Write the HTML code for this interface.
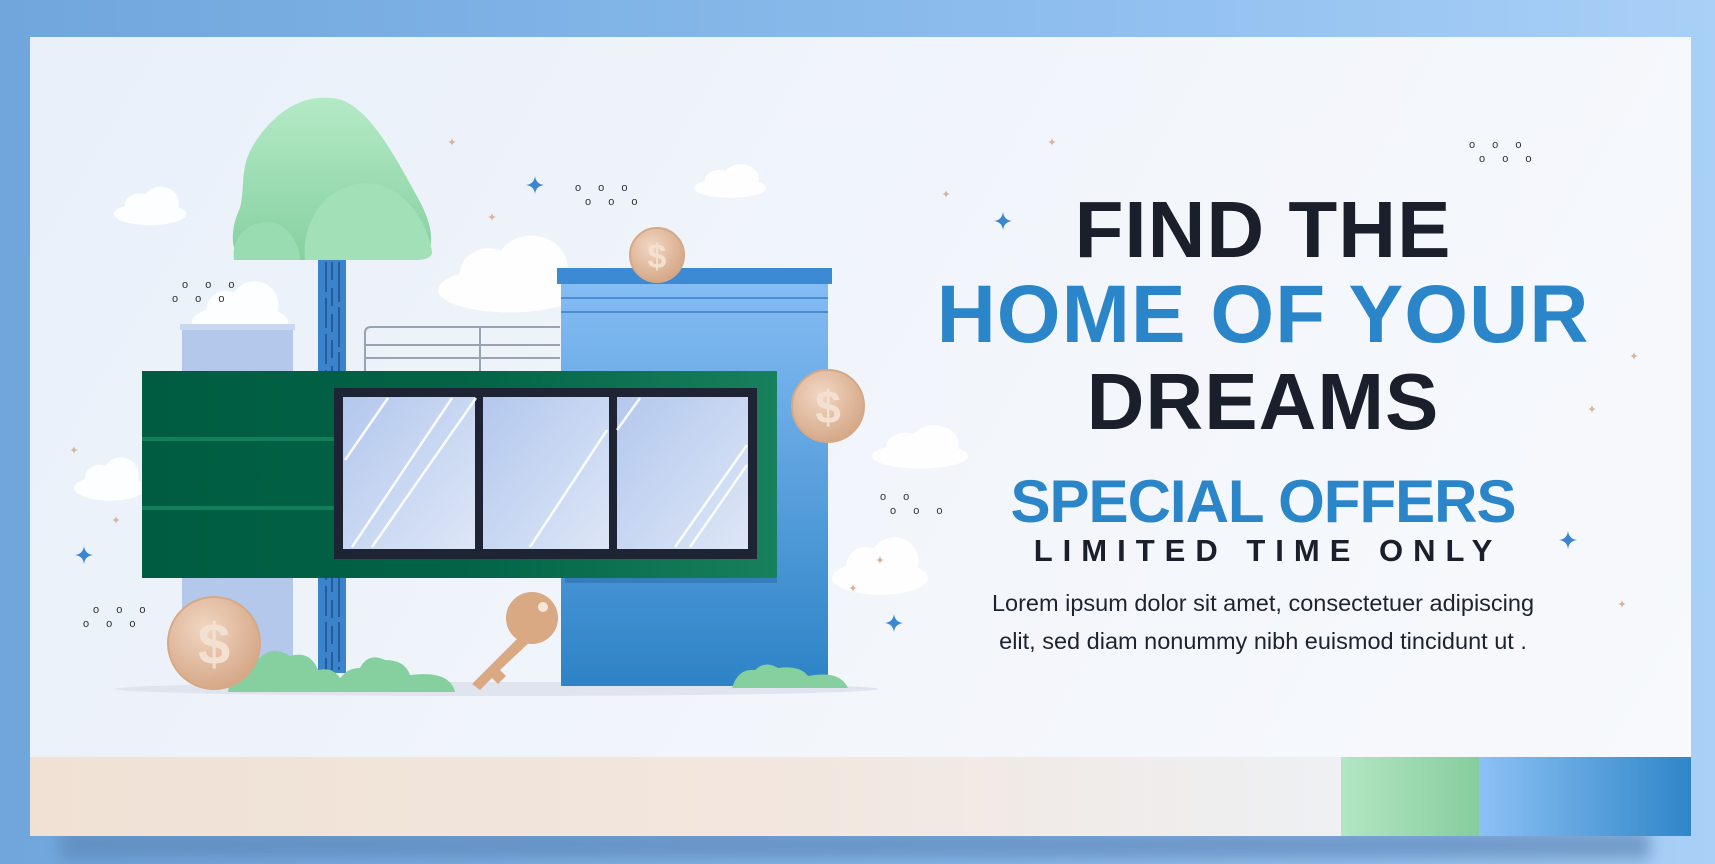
<!DOCTYPE html>
<html><head><meta charset="utf-8"><style>
*{margin:0;padding:0;box-sizing:border-box}
body{width:1715px;height:864px;overflow:hidden;background:linear-gradient(90deg,#6fa6dc,#8dbdee 60%,#a9d0f7);position:relative;font-family:"Liberation Sans",sans-serif}
.a{position:absolute}
.panel{left:30px;top:37px;width:1661px;height:720px;background:linear-gradient(120deg,#e9f0fa,#f3f6fb 60%,#f7f9fc)}
.t{position:absolute;left:900px;width:726px;text-align:center;font-weight:bold;white-space:nowrap}
.dots{position:absolute;font-size:11px;letter-spacing:7px;color:#333;line-height:14px}
</style></head><body>
<div class="a" style="left:60px;top:830px;width:1590px;height:30px;background:#5d86b8;filter:blur(8px);opacity:.7"></div>
<div class="a panel"></div>
<div class="a" style="left:30px;top:757px;width:1311px;height:79px;background:linear-gradient(90deg,#f0e1d4,#f2e7df 60%,#eef0f3)"></div>
<div class="a" style="left:1341px;top:757px;width:138px;height:79px;background:linear-gradient(90deg,#b3e6c3,#86cd9d)"></div>
<div class="a" style="left:1479px;top:757px;width:212px;height:79px;background:linear-gradient(90deg,#8cc1f5,#2f86c8)"></div>

<svg class="a" style="left:0;top:0" width="1715" height="864">
<defs>
<linearGradient id="tw" x1="0" y1="0" x2="0" y2="1"><stop offset="0" stop-color="#86bdf5"/><stop offset="1" stop-color="#2d83c6"/></linearGradient>
<linearGradient id="gb" x1="0" y1="0" x2="1" y2="0"><stop offset="0" stop-color="#005c40"/><stop offset=".5" stop-color="#026346"/><stop offset="1" stop-color="#17805c"/></linearGradient>
<linearGradient id="tr" x1="0" y1="0" x2="0" y2="1"><stop offset="0" stop-color="#b4eac6"/><stop offset="1" stop-color="#86d0a0"/></linearGradient>
<radialGradient id="cn" cx=".4" cy=".35" r=".7"><stop offset="0" stop-color="#f1d7c3"/><stop offset="1" stop-color="#d4a584"/></radialGradient>
<linearGradient id="pn" x1="0" y1="0" x2="1" y2="1"><stop offset="0" stop-color="#b3c8ee"/><stop offset="1" stop-color="#dde6f6"/></linearGradient>
<g id="cl"><ellipse cx="0" cy="0" rx="40" ry="14" fill="#fff"/><circle cx="-12" cy="-10" r="16" fill="#fff"/><circle cx="12" cy="-14" r="20" fill="#fff"/></g>
<g id="sp"><path d="M0-9Q1-1 9 0Q1 1 0 9Q-1 1-9 0Q-1-1 0-9Z"/></g>
</defs>
<g opacity=".9">
<use href="#cl" transform="translate(150,214) scale(.9,.8)"/>
<use href="#cl" transform="translate(240,322) scale(1.2)"/>
<use href="#cl" transform="translate(510,290) scale(1.8,1.6)"/>
<use href="#cl" transform="translate(730,188) scale(.9,.7)"/>
<use href="#cl" transform="translate(110,488) scale(.9)"/>
<use href="#cl" transform="translate(920,456) scale(1.2,.9)"/>
<use href="#cl" transform="translate(880,578) scale(1.2)"/>
</g>
<g fill="#3b86d0"><use href="#sp" transform="translate(535,185)"/><use href="#sp" transform="translate(84,555)"/><use href="#sp" transform="translate(1003,221)"/><use href="#sp" transform="translate(894,623)"/><use href="#sp" transform="translate(1568,540)"/></g>
<g fill="#d7b39a"><use href="#sp" transform="translate(452,142) scale(.45)"/><use href="#sp" transform="translate(492,217) scale(.45)"/><use href="#sp" transform="translate(946,194) scale(.45)"/><use href="#sp" transform="translate(1052,142) scale(.45)"/><use href="#sp" transform="translate(1634,356) scale(.45)"/><use href="#sp" transform="translate(1592,409) scale(.45)"/><use href="#sp" transform="translate(1622,604) scale(.45)"/><use href="#sp" transform="translate(74,450) scale(.45)"/><use href="#sp" transform="translate(116,520) scale(.45)"/><use href="#sp" transform="translate(880,560) scale(.45)"/><use href="#sp" transform="translate(853,588) scale(.45)"/></g>
<ellipse cx="497" cy="689" rx="382" ry="7" fill="#dfe4ee"/>
<rect x="182" y="326" width="111" height="336" fill="#b3c8ea"/>
<rect x="180" y="324" width="115" height="6" fill="#c9d7f0"/>
<rect x="318" y="258" width="28" height="415" fill="#3b84cb"/>
<g stroke="#1d4f8c" stroke-width="1.5"><line x1="326" y1="262" x2="326" y2="670" stroke-dasharray="30 6"/><line x1="332" y1="262" x2="332" y2="670" stroke-dasharray="18 8"/><line x1="339" y1="262" x2="339" y2="670" stroke-dasharray="40 5"/></g>
<path d="M250 260 C228 260 230 228 240 208 C246 185 238 165 258 138 C282 104 312 92 342 100 C372 112 396 158 418 198 C440 238 432 260 412 260Z" fill="url(#tr)"/>
<path d="M305 260 C300 210 340 175 380 185 C410 195 428 225 432 252 C432 258 425 260 415 260Z" fill="#a2e0b8"/>
<path d="M234 260 C230 232 258 215 280 225 C295 235 300 250 300 260Z" fill="#9adcb2"/>
<g stroke="#9aa3b2" stroke-width="2" fill="none"><path d="M365 372 V333 Q365 327 371 327 H560"/><line x1="365" y1="345" x2="560" y2="345"/><line x1="365" y1="358" x2="560" y2="358"/><line x1="480" y1="327" x2="480" y2="372"/></g>
<rect x="561" y="278" width="267" height="408" fill="url(#tw)"/>
<rect x="557" y="268" width="275" height="16" fill="#3d8ad4"/>
<line x1="561" y1="298" x2="828" y2="298" stroke="#3b7fc6" stroke-width="1.5"/>
<line x1="561" y1="312" x2="828" y2="312" stroke="#3b7fc6" stroke-width="1.5"/>
<rect x="142" y="371" width="635" height="207" fill="url(#gb)"/>
<rect x="142" y="437" width="192" height="4" fill="#11805a"/>
<rect x="142" y="506" width="192" height="4" fill="#11805a"/>
<rect x="565" y="578" width="212" height="5" fill="#2b6fae" opacity=".6"/>
<rect x="334" y="388" width="423" height="171" fill="#1e2433"/>
<rect x="343" y="397" width="132" height="152" fill="url(#pn)"/>
<rect x="483" y="397" width="126" height="152" fill="url(#pn)"/>
<rect x="617" y="397" width="131" height="152" fill="url(#pn)"/>
<g stroke="#fff" stroke-width="2.5" opacity=".9"><line x1="345" y1="460" x2="388" y2="398"/><line x1="352" y1="547" x2="452" y2="398"/><line x1="372" y1="547" x2="476" y2="398"/><line x1="530" y1="547" x2="607" y2="430"/><line x1="617" y1="430" x2="640" y2="398"/><line x1="675" y1="547" x2="747" y2="445"/><line x1="690" y1="547" x2="747" y2="465"/></g>
<g fill="#86cf9f"><path d="M228 692 Q232 660 260 658 Q272 645 290 656 Q310 650 318 670 Q340 665 345 692Z"/><path d="M335 692 Q340 668 360 668 Q368 652 385 660 Q405 660 410 675 Q450 670 455 692Z"/><path d="M732 688 Q738 668 755 670 Q765 660 778 668 Q800 665 808 676 Q840 670 848 688Z"/></g>
<g fill="#d9a983"><circle cx="532" cy="618" r="26"/><path d="M520 636 L472 684 L480 690 L492 678 L498 684 L506 676 L500 670 L532 640Z"/></g>
<circle cx="543" cy="607" r="5" fill="#f6e6da"/>
<g font-family="Liberation Sans" font-weight="bold" fill="#f3e0d1" text-anchor="middle">
<circle cx="657" cy="255" r="27" fill="url(#cn)" stroke="#d6a986" stroke-width="2"/><text x="657" y="268" font-size="34">$</text>
<circle cx="828" cy="406" r="36" fill="url(#cn)" stroke="#d6a986" stroke-width="2"/><text x="828" y="423" font-size="46">$</text>
<circle cx="214" cy="643" r="46" fill="url(#cn)" stroke="#d6a986" stroke-width="2"/><text x="214" y="664" font-size="58">$</text>
</g>
</svg>

<div class="dots" style="left:575px;top:181px">o o o<br>&nbsp;o o o</div>
<div class="dots" style="left:172px;top:278px">&nbsp;o o o<br>o o o</div>
<div class="dots" style="left:83px;top:603px">&nbsp;o o o<br>o o o</div>
<div class="dots" style="left:880px;top:490px">o o<br>&nbsp;o o o</div>
<div class="dots" style="left:1469px;top:138px">o o o<br>&nbsp;o o o</div>

<div class="t" style="top:184px;font-size:80px;color:#1a1f2b;letter-spacing:1px">FIND THE</div>
<div class="t" style="top:268px;font-size:82px;color:#2a86c8;letter-spacing:1px">HOME OF YOUR</div>
<div class="t" style="top:356px;font-size:80px;color:#1a1f2b;letter-spacing:1px">DREAMS</div>
<div class="t" style="top:467px;font-size:60px;color:#2a86c8;letter-spacing:-1px">SPECIAL OFFERS</div>
<div class="t" style="top:533px;font-size:31px;color:#1a1f2b;letter-spacing:10px;padding-left:10px">LIMITED TIME ONLY</div>
<div class="t" style="top:584px;font-size:23.5px;color:#1e2330;font-weight:normal;line-height:38px">Lorem ipsum dolor sit amet, consectetuer adipiscing<br>elit, sed diam nonummy nibh euismod tincidunt ut .</div>
</body></html>
